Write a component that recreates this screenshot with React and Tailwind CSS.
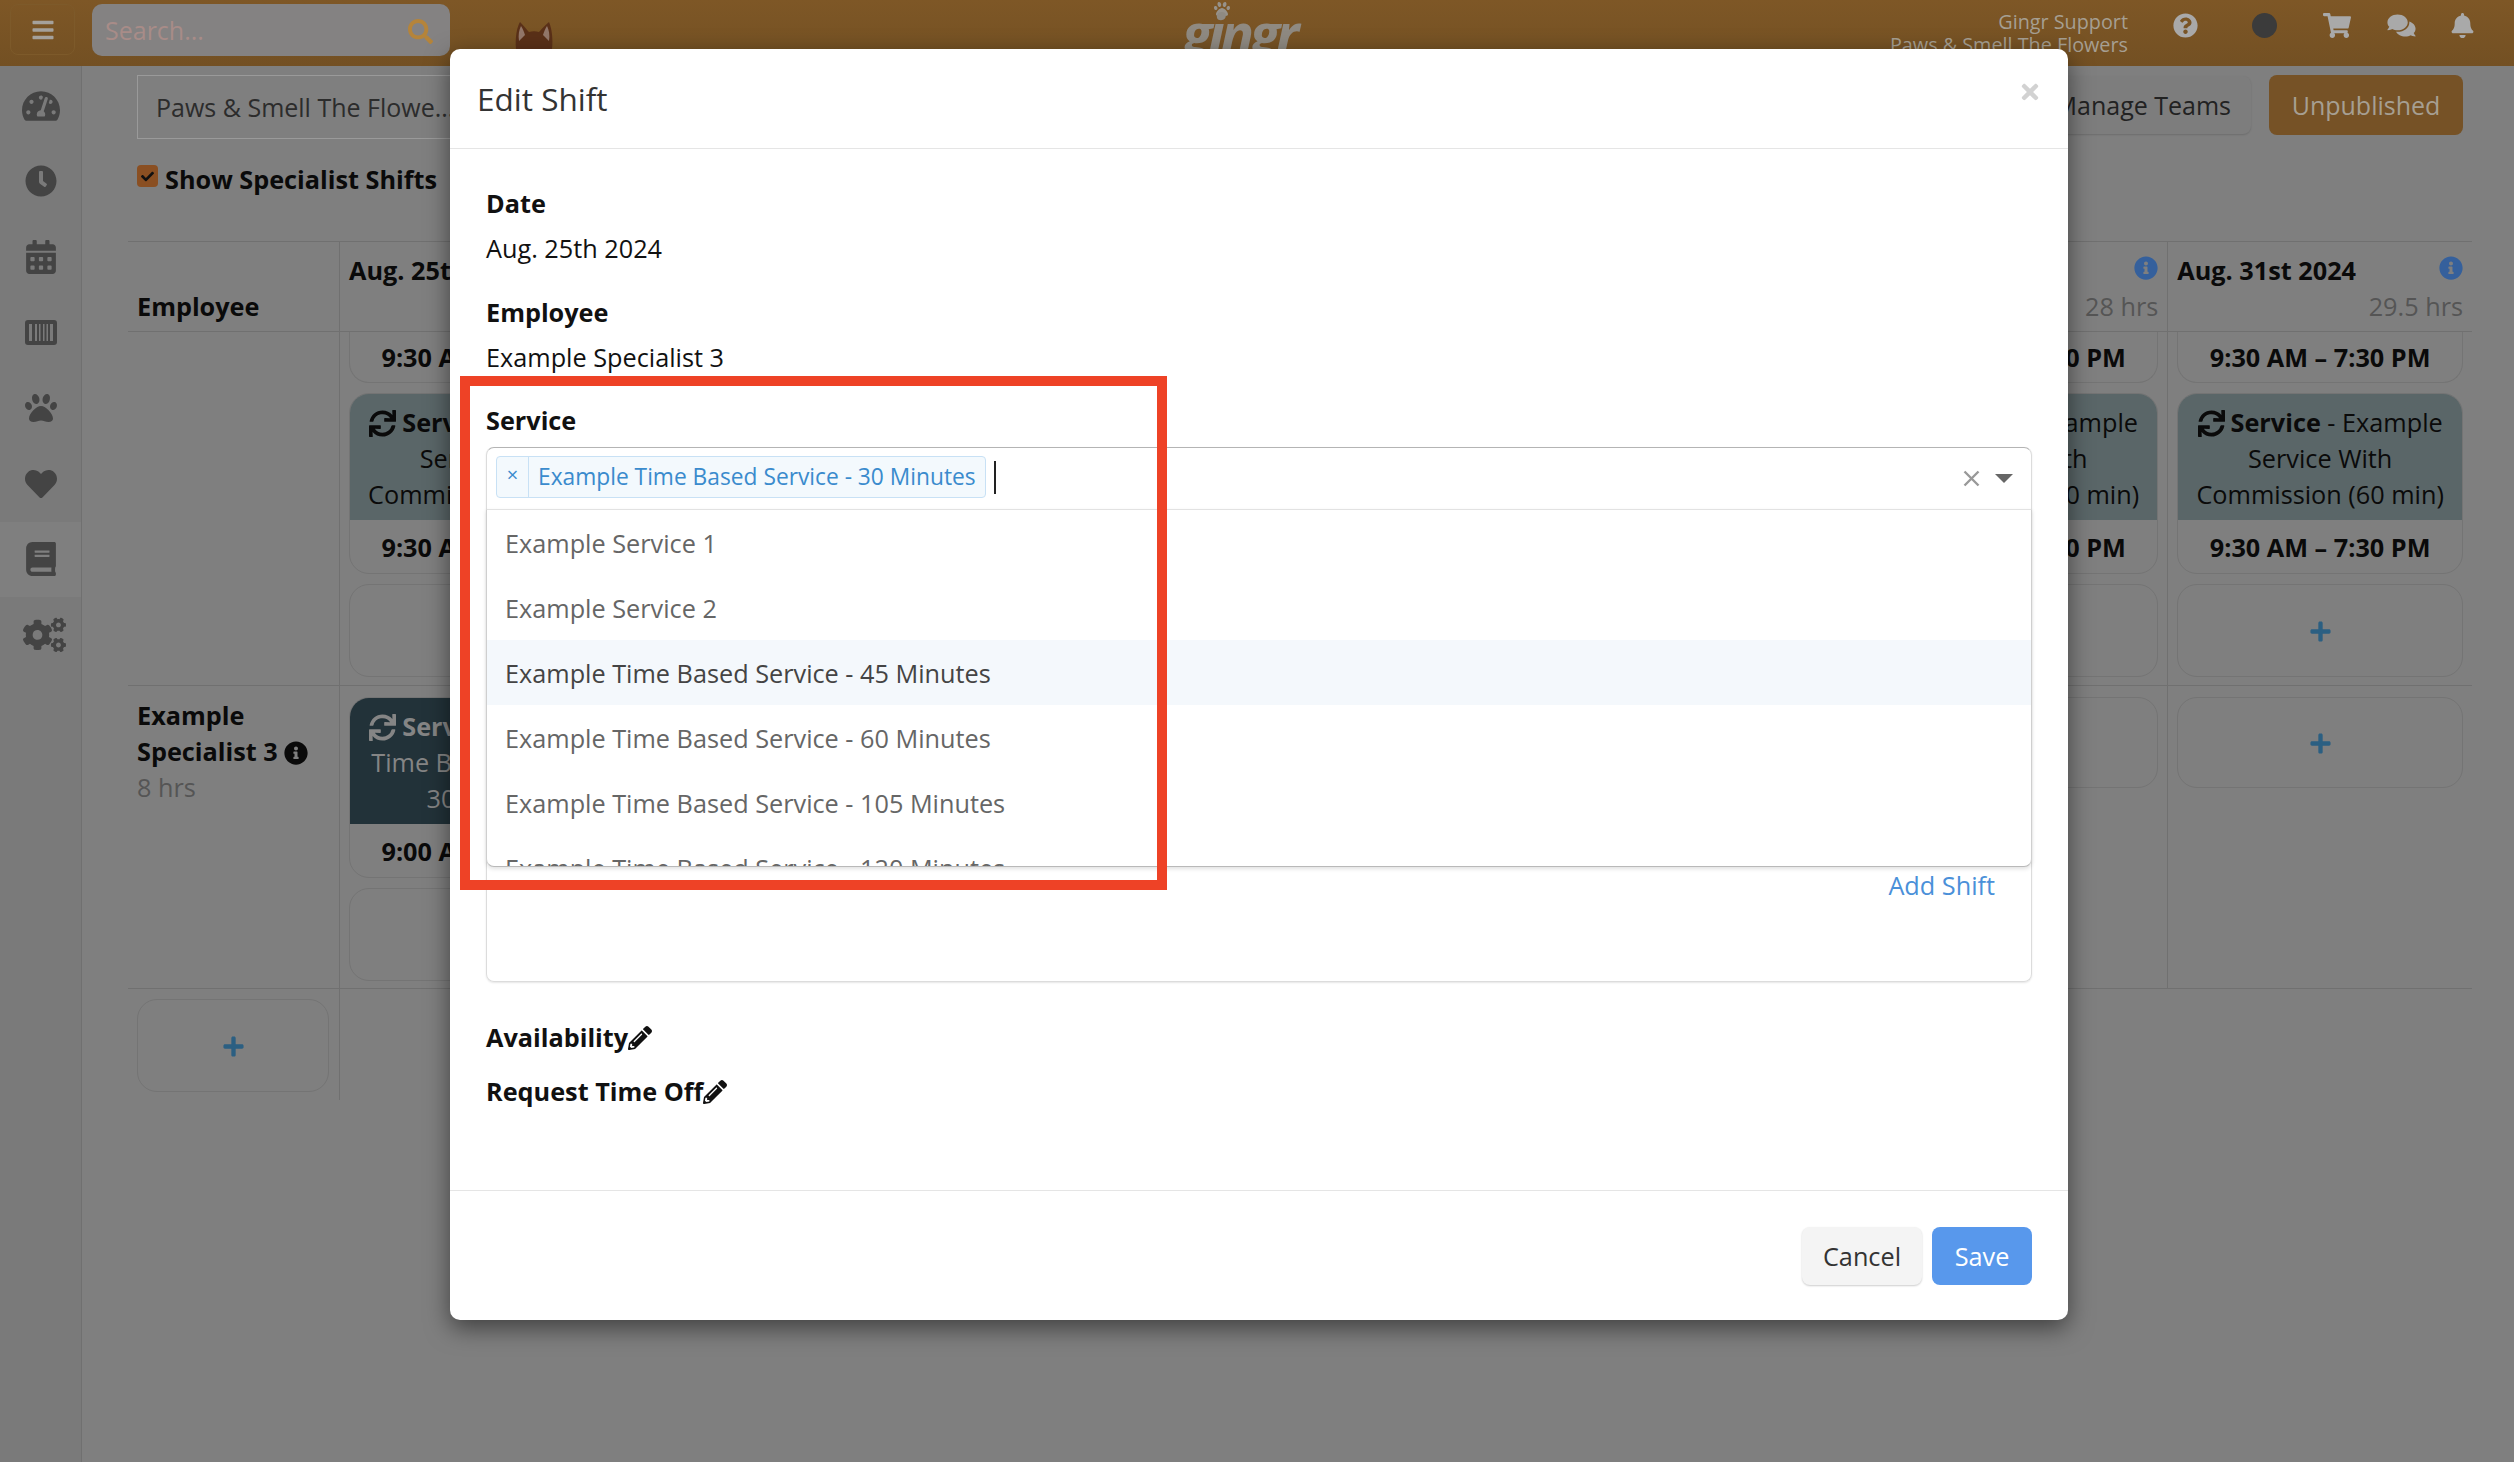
import React from 'react';
import { FaBars, FaSearch, FaTachometerAlt, FaClock, FaCalendarAlt, FaPaw, FaHeart, FaBook, FaCogs, FaSync, FaInfoCircle, FaQuestionCircle, FaShoppingCart, FaComments, FaBell, FaPencilAlt, FaCheck, FaTimes, FaPlus } from 'react-icons/fa';

const days = [
  ['Aug. 25th 2024', '8 hrs'], ['Aug. 26th 2024', '24 hrs'], ['Aug. 27th 2024', '24 hrs'], ['Aug. 28th 2024', '28 hrs'],
  ['Aug. 29th 2024', '28 hrs'], ['Aug. 30th 2024', '28 hrs'], ['Aug. 31st 2024', '29.5 hrs'],
];

function BarcodeIcon({ className }) {
  return (
    <svg viewBox="0 0 32 25" className={className} fill="currentColor">
      <path fillRule="evenodd" d="M3 0h26a3 3 0 0 1 3 3v19a3 3 0 0 1-3 3H3a3 3 0 0 1-3-3V3a3 3 0 0 1 3-3zM4 4v17h3V4zM10 4v17h2V4zM14 4v17h1.5V4zM18 4v17h1.5V4zM21.5 4v17h1.5V4zM25 4v17h3V4z" />
    </svg>
  );
}

const navItems = [
  { Icon: FaTachometerAlt, cls: 'w-[38px] h-[34px]' },
  { Icon: FaClock, cls: 'w-[32px] h-[32px]' },
  { Icon: FaCalendarAlt, cls: 'w-[30px] h-[34px]' },
  { Icon: BarcodeIcon, cls: 'w-[32px] h-[25px]' },
  { Icon: FaPaw, cls: 'w-[34px] h-[32px]' },
  { Icon: FaHeart, cls: 'w-[34px] h-[32px]' },
  { Icon: FaBook, cls: 'w-[30px] h-[34px]', active: true },
  { Icon: FaCogs, cls: 'w-[43px] h-[36px] ml-[8px]' },
];

const options = ['Example Service 1', 'Example Service 2', 'Example Time Based Service - 45 Minutes', 'Example Time Based Service - 60 Minutes', 'Example Time Based Service - 105 Minutes', 'Example Time Based Service - 120 Minutes'];

function AddCard({ h = 'h-[93px]' }) {
  return (
    <div className={`${h} rounded-[20px] border border-[#747474] flex items-center justify-center`}>
      <FaPlus className="w-[23px] h-[23px] mt-[2px] text-[#2b5f82]" />
    </div>
  );
}

function TimeOnly() {
  return (
    <div className="h-[51px] rounded-b-[20px] border border-t-0 border-[#747474] flex items-center justify-center font-bold whitespace-nowrap">9:30 AM – 7:30 PM</div>
  );
}

function ShiftCard({ dark, lines, time = '9:30 AM – 7:30 PM' }) {
  return (
    <div className="rounded-[20px] border border-[#747474] overflow-hidden">
      <div className={`${dark ? 'bg-[#223239] text-[#858585]' : 'bg-[#5a6668] text-[#0a0a0a]'} h-[127px] -mt-px pt-[11px] leading-[36px] text-center whitespace-nowrap`}>
        <div><FaSync className="inline w-[27px] h-[27px] mr-[6px] -mt-[4px]" /><b>Service</b> - {lines[0]}</div>
        <div>{lines[1]}</div>
        <div>{lines[2]}</div>
      </div>
      <div className="h-[53px] flex items-center justify-center font-bold whitespace-nowrap">{time}</div>
    </div>
  );
}

const Cell = ({ children, cls = '' }) => (
  <div className={`border-l border-[#707070] pl-[9px] pr-[9px] min-w-0 ${cls}`}>{children}</div>
);

export default function App() {
  return (
    <div className="relative w-full h-[1462px] overflow-hidden bg-[#7f7f7f] text-[#0a0a0a] text-[25.25px] leading-[36px] font-['Open_Sans',sans-serif]">
      {/* top bar */}
      <header className="h-[66px] flex items-start bg-gradient-to-b from-[#7e5726] to-[#735023]">
        <button className="ml-[10px] mt-[4px] w-[65px] h-[51px] rounded-[8px] border border-[#7d5a2a] flex items-center justify-center text-[#a5a19b]">
          <FaBars className="w-[24px] h-[24px]" />
        </button>
        <div className="ml-[17px] mt-[4px] w-[358px] h-[52px] rounded-[10px] bg-[#848282] flex items-center justify-between pl-[13px] pr-[17px]">
          <span className="text-[#a88c88] text-[25px]">Search...</span>
          <FaSearch className="w-[25px] h-[25px] mt-[3px] text-[#b5843a]" />
        </div>
        <svg viewBox="0 0 40 30" className="ml-[64px] mt-[21px] w-[40px] h-[30px]">
          <path d="M2 28 C1 16 3 6 6 1 C10 5 13 9 15 11 C18 10 22 10 25 11 C28 8 31 4 35 1 C38 8 39 18 38 28 Z" fill="#5a3018" />
          <path d="M5 20 C4 14 5 9 7 5 C9 8 10 11 11 14 Z M35 20 C36 14 35 9 33 5 C31 8 30 11 29 14 Z" fill="#93776a" />
        </svg>
        <div className="ml-[628px] relative h-[66px] w-[120px]">
          <FaPaw className="absolute left-[31px] top-[1px] w-[18px] h-[16px] text-[#97928a]" />
          <span className="absolute left-0 top-[2px] text-[56px] leading-[60px] font-bold italic text-[#8f8a82] tracking-[-4.3px]">gingr</span>
        </div>
        <div className="ml-auto mr-[40px] flex items-center h-[50px] text-[#a9a9a9]">
          <div className="text-right text-[19.8px] leading-[23px] text-[#a69f92] mt-[15px] whitespace-nowrap">
            <div>Gingr Support</div>
            <div>Paws &amp; Smell The Flowers</div>
          </div>
          <FaQuestionCircle className="ml-[45px] w-[25px] h-[25px]" />
          <div className="ml-[54px] w-[25px] h-[25px] rounded-full bg-[#3b3b3b]" />
          <FaShoppingCart className="ml-[46px] w-[28px] h-[25px]" />
          <FaComments className="ml-[36px] w-[29px] h-[25px]" />
          <FaBell className="ml-[35px] w-[23px] h-[25px]" />
        </div>
      </header>

      <div className="flex">
        {/* sidebar */}
        <aside className="w-[82px] h-[1396px] shrink-0 bg-[#7a7a7a] border-r border-[#707070] pt-[2px]">
          {navItems.map(({ Icon, cls, active }, i) => (
            <div key={i} className={`h-[75.6px] flex items-center justify-center ${active ? 'bg-[#7f7f7f]' : ''}`}>
              <Icon className={`${cls} text-[#444444]`} />
            </div>
          ))}
        </aside>

        {/* main */}
        <main className="flex-1 min-w-0 pl-[46px] pr-[42px]">
          <div className="flex items-start justify-between pt-[9px] pl-[9px] pr-[9px]">
            <div className="w-[330px] h-[64px] border border-[#9a9a9a] flex items-center pl-[18px] text-[#2c2c2c] whitespace-nowrap overflow-hidden text-[25px]">Paws &amp; Smell The Flowe...</div>
            <div className="flex gap-[18px] whitespace-nowrap text-[25px]">
              <div className="h-[58px] mt-px px-[20px] rounded-[8px] bg-[#7d7d7d] shadow-[0_1px_2px_rgba(0,0,0,0.15)] flex items-center text-[#222222]">Manage Teams</div>
              <div className="h-[60px] w-[194px] rounded-[8px] bg-[#765226] flex items-center justify-center text-[#a69f92]">Unpublished</div>
            </div>
          </div>
          <div className="mt-[25px] pl-[9px] flex items-center h-[30px]">
            <span className="w-[21px] h-[22px] rounded-[4px] bg-[#8a4f22] flex items-center justify-center -mt-[6px]">
              <FaCheck className="w-[13px] h-[13px] text-[#111111]" />
            </span>
            <b className="ml-[7px] whitespace-nowrap">Show Specialist Shifts</b>
          </div>

          {/* schedule grid */}
          <div className="mt-[47px] grid grid-cols-[211px_repeat(7,minmax(0,1fr))] border-t border-[#707070]">
            <div className="h-[90px] border-b border-[#707070] pl-[9px] pt-[46px] font-bold">Employee</div>
            {days.map(([d, hrs]) => (
              <Cell key={d} cls="h-[90px] border-b">
                <div className="flex items-start justify-between pt-[10px] whitespace-nowrap">
                  <b>{d}</b>
                  <FaInfoCircle className="w-[24px] h-[24px] mt-[4px] text-[#35609c]" />
                </div>
                <div className="text-right text-[#555555]">{hrs}</div>
              </Cell>
            ))}

            {/* row 1 */}
            <div className="h-[354px] border-b border-[#707070]" />
            {days.map(([d]) => (
              <Cell key={d} cls="h-[354px] border-b">
                <TimeOnly />
                <div className="mt-[10px]"><ShiftCard lines={['Example', 'Service With', 'Commission (60 min)']} /></div>
                <div className="mt-[10px]"><AddCard /></div>
              </Cell>
            ))}

            {/* row 2 */}
            <div className="h-[303px] border-b border-[#707070] pl-[9px] pt-[11px]">
              <b className="block">Example</b>
              <b className="block whitespace-nowrap">Specialist 3 <FaInfoCircle className="inline w-[24px] h-[24px] -mt-[3px] text-[#0a0a0a]" /></b>
              <div className="text-[#555555]">8 hrs</div>
            </div>
            {days.map(([d], i) => (
              <Cell key={d} cls="h-[303px] border-b pt-[11px]">
                {i === 0 ? (
                  <>
                    <ShiftCard dark lines={['Example', 'Time Based Service -', '30 Minutes']} time="9:00 AM – 5:00 PM" />
                    <div className="mt-[10px]"><AddCard /></div>
                  </>
                ) : (
                  <AddCard h="h-[91px]" />
                )}
              </Cell>
            ))}

            {/* row 3 */}
            <div className="h-[111px] pl-[9px] pr-[10px] pt-[10px]"><AddCard /></div>
            {days.map(([d], i) => (
              <div key={d} className={`h-[111px] ${i === 0 ? 'border-l border-[#707070]' : ''}`} />
            ))}
          </div>
        </main>
      </div>

      {/* modal */}
      <div className="absolute left-[450px] top-[49px] w-[1618px] h-[1271px] rounded-[10px] bg-white text-[#111111] flex flex-col shadow-[0_8px_24px_rgba(0,0,0,0.5)]">
        <div className="h-[100px] shrink-0 border-b border-[#e5e5e5] flex items-start justify-between pl-[27px] pr-[26px]">
          <h2 className="mt-[28px] text-[31.5px] leading-[44px] text-[#333333]">Edit Shift</h2>
          <FaTimes className="mt-[31px] w-[24px] h-[24px] text-[#d2d2d2]" />
        </div>
        <div className="flex-1 px-[36px] pt-[32px] leading-[45px] text-[#111111]">
          <b className="block">Date</b>
          <div>Aug. 25th 2024</div>
          <b className="block mt-[19px]">Employee</b>
          <div>Example Specialist 3</div>
          <b className="block mt-[18px] mb-[4px]">Service</b>

          <div className="relative h-[535px] rounded-[8px] border border-[#dcdcdc] border-t-[#b4b4b4] shadow-[0_1px_2px_rgba(0,0,0,0.1)]">
            <div className="h-[61px] flex items-center pl-[9px] pr-[18px] pb-[3px]">
              <div className="h-[42px] flex rounded-[4px] border border-[#c8e1f5] bg-[#f3f9fd] text-[#3a8bcd] text-[22.75px] leading-[40px] whitespace-nowrap">
                <span className="w-[32px] text-center border-r border-[#c8e1f5] text-[20px] leading-[36px]">×</span>
                <span className="px-[9px]">Example Time Based Service - 30 Minutes</span>
              </div>
              <span className="ml-[8px] w-[2px] h-[33px] bg-[#222222]" />
              <svg viewBox="0 0 17 17" className="ml-auto mt-[2px] w-[17px] h-[17px] text-[#999999]" stroke="currentColor" strokeWidth="2.4">
                <path d="M1.5 1.5 15.5 15.5M15.5 1.5 1.5 15.5" />
              </svg>
              <span className="ml-[15px] mt-[3px] w-0 h-0 border-x-[9px] border-x-transparent border-t-[9px] border-t-[#666666]" />
            </div>
            <div className="absolute left-[-1px] right-[-1px] top-[61px] h-[358px] overflow-hidden bg-white rounded-b-[8px] border border-t-[#e2e2e2] border-x-[#cfcfcf] border-b-[#b9b9b9] shadow-[0_2px_4px_rgba(0,0,0,0.12)]">
              {options.map((o, i) => (
                <div key={o} className={`h-[65px] flex items-center pl-[18px] pt-[2px] whitespace-nowrap ${i === 2 ? 'bg-[#f4f8fc] text-[#444444]' : 'text-[#666666]'}`}>{o}</div>
              ))}
            </div>
            <div className="absolute right-[36px] top-[419px] text-[#4a90d9] leading-[36px]">Add Shift</div>
          </div>

          <div className="mt-[33px] font-bold flex items-center">Availability<FaPencilAlt className="w-[24px] h-[24px] text-[#111111]" /></div>
          <div className="mt-[9px] font-bold flex items-center">Request Time Off<FaPencilAlt className="w-[24px] h-[24px] text-[#111111]" /></div>
        </div>
        <div className="h-[130px] shrink-0 border-t border-[#e5e5e5] flex items-start justify-end gap-[10px] pr-[36px] pt-[36px]">
          <button className="w-[120px] h-[58px] rounded-[8px] bg-[#f4f4f4] text-[#333333] shadow-[0_1px_2px_rgba(0,0,0,0.2)]">Cancel</button>
          <button className="w-[100px] h-[58px] rounded-[8px] bg-[#5898ec] text-white">Save</button>
        </div>
      </div>

      {/* annotation */}
      <div className="absolute left-[460px] top-[376px] w-[707px] h-[514px] border-[10px] border-[#ee4226] pointer-events-none" />
    </div>
  );
}
